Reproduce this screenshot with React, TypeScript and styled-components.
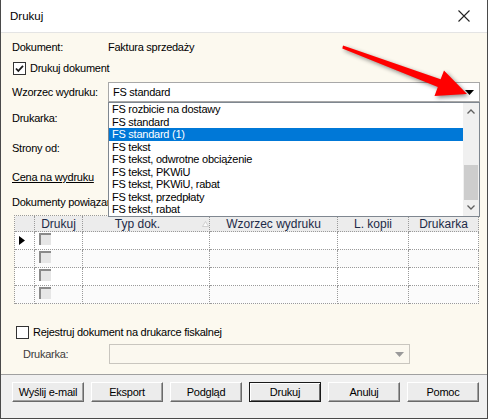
import styled, { createGlobalStyle, css } from "styled-components";

const GlobalStyle = createGlobalStyle`
  html, body {
    margin: 0;
    padding: 0;
    background: #ffffff;
  }
  body {
    font-family: "Liberation Sans", Arial, sans-serif;
    font-size: 11px;
    color: #000;
  }
`;

const templates = [
  "FS rozbicie na dostawy",
  "FS standard",
  "FS standard (1)",
  "FS tekst",
  "FS tekst, odwrotne obciążenie",
  "FS tekst, PKWiU",
  "FS tekst, PKWiU, rabat",
  "FS tekst, przedpłaty",
  "FS tekst, rabat",
];

const columns = ["", "Drukuj", "Typ dok.", "Wzorzec wydruku", "L. kopii", "Drukarka"];
const buttons = ["Wyślij e-mail", "Eksport", "Podgląd", "Drukuj", "Anuluj", "Pomoc"];

const CheckMark = () => (
  <svg width="11" height="11" viewBox="0 0 11 11">
    <path d="M2 5.5 L4.3 8 L9 2.8" fill="none" stroke="#1a1a1a" strokeWidth="1.8" />
  </svg>
);

const ChevronUp = () => (
  <svg width="8" height="5" viewBox="0 0 8 5">
    <path d="M0.5 4.5 L4 1 L7.5 4.5" fill="none" stroke="#606060" strokeWidth="1.3" />
  </svg>
);

const ChevronDown = () => (
  <svg width="8" height="5" viewBox="0 0 8 5">
    <path d="M0.5 0.5 L4 4 L7.5 0.5" fill="none" stroke="#606060" strokeWidth="1.3" />
  </svg>
);

const DropArrow = ({ color }: { color: string }) => (
  <svg width="9" height="5" viewBox="0 0 9 5">
    <path d="M0 0 H9 L4.5 5 Z" fill={color} />
  </svg>
);

export default function App() {
  return (
    <>
      <GlobalStyle />
      <Window>
        <TitleBar>
          <span>Drukuj</span>
          <svg width="12" height="12" viewBox="0 0 12 12">
            <path d="M0.5 0.5 L11.5 11.5 M11.5 0.5 L0.5 11.5" stroke="#222" strokeWidth="1.1" />
          </svg>
        </TitleBar>

        <Body>
          <Row $mt={7} $h={14}>
            <Label>Dokument:</Label>
            <span>Faktura sprzedaży</span>
          </Row>

          <Row $mt={7} $h={14} $indent={1}>
            <Check $checked>
              <CheckMark />
            </Check>
            <CheckText>Drukuj dokument</CheckText>
          </Row>

          <Row $mt={7} $h={20}>
            <Label>Wzorzec wydruku:</Label>
            <Combo>
              <ComboText>FS standard</ComboText>
              <DropArrow color="#000" />
              <ListBox>
                <Items>
                  {templates.map((t, i) => (
                    <Item key={t} $selected={i === 2}>
                      {t}
                    </Item>
                  ))}
                </Items>
                <ScrollBar>
                  <ScrollButton>
                    <ChevronUp />
                  </ScrollButton>
                  <Track>
                    <Thumb />
                  </Track>
                  <ScrollButton>
                    <ChevronDown />
                  </ScrollButton>
                </ScrollBar>
              </ListBox>
            </Combo>
          </Row>

          <Row $mt={6} $h={20}>
            <Label>Drukarka:</Label>
          </Row>

          <Row $mt={10} $h={20}>
            <Label>Strony od:</Label>
          </Row>

          <Row $mt={12} $h={14}>
            <LinkLabel>Cena na wydruku</LinkLabel>
          </Row>

          <Row $mt={11} $h={14}>
            <span>Dokumenty powiązane:</span>
          </Row>

          <Grid>
            {columns.map((c, i) => (
              <HeadCell key={"h" + i}>
                {c === "Typ dok." ? (
                  <>
                    <HeadText>{c}</HeadText>
                    <svg width="7" height="6" viewBox="0 0 7 6">
                      <path d="M3.5 0.5 L6.5 5.5 H0.5 Z" fill="#fbfbfb" stroke="#c8c8c8" strokeWidth="0.8" />
                    </svg>
                  </>
                ) : (
                  c
                )}
              </HeadCell>
            ))}
            {[0, 1, 2, 3].map((r) => (
              <GridRow key={r}>
                <Cell $alt={r % 2 === 1}>
                  {r === 0 && (
                    <svg width="6" height="9" viewBox="0 0 6 9">
                      <path d="M0 0 L6 4.5 L0 9 Z" fill="#000" />
                    </svg>
                  )}
                </Cell>
                <Cell $alt={r % 2 === 1}>
                  <FlatCheck />
                </Cell>
                <Cell $alt={r % 2 === 1} />
                <Cell $alt={r % 2 === 1} />
                <Cell $alt={r % 2 === 1} />
                <Cell $alt={r % 2 === 1} />
              </GridRow>
            ))}
          </Grid>

          <Row $mt={21} $h={14} $indent={4}>
            <Check />
            <CheckText>Rejestruj dokument na drukarce fiskalnej</CheckText>
          </Row>

          <Row $mt={5} $h={20} $indent={11}>
            <Label $w={86} $muted>
              Drukarka:
            </Label>
            <Combo $disabled>
              <ComboText />
              <DropArrow color="#9a9a9a" />
            </Combo>
          </Row>
        </Body>

        <Footer>
          {buttons.map((b) => (
            <Button key={b} $default={b === "Drukuj"}>
              {b}
            </Button>
          ))}
        </Footer>

        <ArrowLayer width="488" height="419" viewBox="0 0 488 419">
          <path
            d="M342 45.5 L439.6 79.3 L443 70.5 L466 94 L433.5 96 L436.8 87 L341.3 48.5 Z"
            fill="#ff0000"
          />
        </ArrowLayer>
      </Window>
    </>
  );
}

const Window = styled.div`
  position: relative;
  width: 488px;
  height: 419px;
  box-sizing: border-box;
  border: 1px solid #4a4a4a;
  border-top: none;
  background: #ffffff;
  display: flex;
  flex-direction: column;
  overflow: hidden;
`;

const TitleBar = styled.div`
  height: 32px;
  flex: none;
  display: flex;
  align-items: center;
  justify-content: space-between;
  padding: 0 17px 0 9px;
  font-size: 11.5px;
  color: #000;
  border-bottom: 1px solid #e4e4e4;
  background: #ffffff;
`;

const Body = styled.div`
  height: 341px;
  flex: none;
  box-sizing: border-box;
  background: #fcf9ef;
  padding-left: 11px;
  display: flex;
  flex-direction: column;
  letter-spacing: -0.25px;
`;

const Row = styled.div<{ $mt: number; $h: number; $indent?: number }>`
  display: flex;
  align-items: center;
  height: ${(p) => p.$h}px;
  margin-top: ${(p) => p.$mt}px;
  margin-left: ${(p) => p.$indent || 0}px;
  white-space: nowrap;
`;

const Label = styled.span<{ $w?: number; $muted?: boolean }>`
  width: ${(p) => p.$w || 96}px;
  flex: none;
  color: ${(p) => (p.$muted ? "#3c3c3c" : "#000")};
`;

const LinkLabel = styled.span`
  text-decoration: underline;
`;

const Check = styled.span<{ $checked?: boolean }>`
  width: 13px;
  height: 13px;
  box-sizing: border-box;
  border: 1px solid #333333;
  background: #ffffff;
  display: flex;
  align-items: center;
  justify-content: center;
  flex: none;
`;

const CheckText = styled.span`
  margin-left: 4px;
`;

const Combo = styled.div<{ $disabled?: boolean }>`
  position: relative;
  height: 20px;
  box-sizing: border-box;
  display: flex;
  align-items: center;
  padding: 0 5px 0 4px;
  ${(p) =>
    p.$disabled
      ? css`
          width: 301px;
          background: #fbf8ef;
          border: 1px solid #c9c6bf;
        `
      : css`
          width: 372px;
          background: #ffffff;
          border: 1px solid #a8a8a8;
        `}
`;

const ComboText = styled.span`
  flex: 1;
`;

const ListBox = styled.div`
  position: absolute;
  top: 19px;
  left: -1px;
  width: 372px;
  height: 115px;
  box-sizing: border-box;
  background: #ffffff;
  border: 1px solid #7f8790;
  display: flex;
  z-index: 3;
`;

const Items = styled.div`
  flex: 1;
  display: flex;
  flex-direction: column;
  overflow: hidden;
`;

const Item = styled.div<{ $selected?: boolean }>`
  height: 12.55px;
  line-height: 12.55px;
  padding-left: 3px;
  white-space: nowrap;
  overflow: hidden;
  background: ${(p) => (p.$selected ? "#0078d7" : "transparent")};
  color: ${(p) => (p.$selected ? "#ffffff" : "#000000")};
`;

const ScrollBar = styled.div`
  width: 16px;
  flex: none;
  background: #f0f0f0;
  display: flex;
  flex-direction: column;
`;

const ScrollButton = styled.div`
  height: 17px;
  display: flex;
  align-items: center;
  justify-content: center;
`;

const Track = styled.div`
  flex: 1;
  display: flex;
  flex-direction: column;
`;

const Thumb = styled.div`
  margin: 45px 1px 0;
  height: 35px;
  background: #cdcdcd;
`;

const Grid = styled.div`
  margin-top: 6px;
  margin-left: 2px;
  width: 465px;
  display: grid;
  grid-template-columns: 20px 48px 127px 128px 71px 70px;
  grid-template-rows: 16px repeat(4, 18px);
  border-top: 1px dotted #9a9a9a;
  border-left: 1px dotted #9a9a9a;
  box-sizing: border-box;
  letter-spacing: 0;
`;

const GridRow = styled.div`
  display: contents;
`;

const HeadCell = styled.div`
  box-sizing: border-box;
  border-right: 1px dotted #9a9a9a;
  border-bottom: 1px dotted #9a9a9a;
  background: #ececec;
  display: flex;
  align-items: center;
  justify-content: center;
  font-size: 12px;
  color: #1d2a47;
  white-space: nowrap;
  overflow: hidden;
`;

const HeadText = styled.span`
  flex: 1;
  text-align: center;
  padding-right: 10px;
`;

const Cell = styled.div<{ $alt?: boolean }>`
  box-sizing: border-box;
  border-right: 1px dotted #9a9a9a;
  border-bottom: 1px dotted #9a9a9a;
  background: ${(p) => (p.$alt ? "#fbfbfb" : "#ffffff")};
  display: flex;
  align-items: center;
  padding-left: 4px;
`;

const FlatCheck = styled.span`
  width: 12px;
  height: 12px;
  box-sizing: border-box;
  border-top: 2px solid #8a8a8a;
  border-left: 2px solid #8a8a8a;
  background: #e6e6e6;
  margin-top: -3px;
`;

const Footer = styled.div`
  flex: 1;
  box-sizing: border-box;
  background: #f0f0f0;
  border-top: 1px solid #a0a0a0;
  padding: 7px 0 0 11px;
  display: flex;
  gap: 7px;
  align-items: flex-start;
`;

const Button = styled.button<{ $default?: boolean }>`
  width: 72px;
  height: 20px;
  padding: 0;
  font-family: "Liberation Sans", Arial, sans-serif;
  font-size: 11px;
  letter-spacing: -0.25px;
  color: #000;
  background: #ececec;
  border: 1px solid;
  border-color: #ffffff #6a6a6a #6a6a6a #ffffff;
  box-shadow: inset -1px -1px 0 #a0a0a0;
  ${(p) =>
    p.$default &&
    css`
      border-color: #1a1a1a;
      box-shadow: inset 1px 1px 0 #ffffff, inset -1px -1px 0 #6a6a6a;
    `}
`;

const ArrowLayer = styled.svg`
  position: absolute;
  top: 0;
  left: 0;
  pointer-events: none;
  z-index: 10;
  filter: drop-shadow(2px 2px 2px rgba(0, 0, 0, 0.45));
`;
